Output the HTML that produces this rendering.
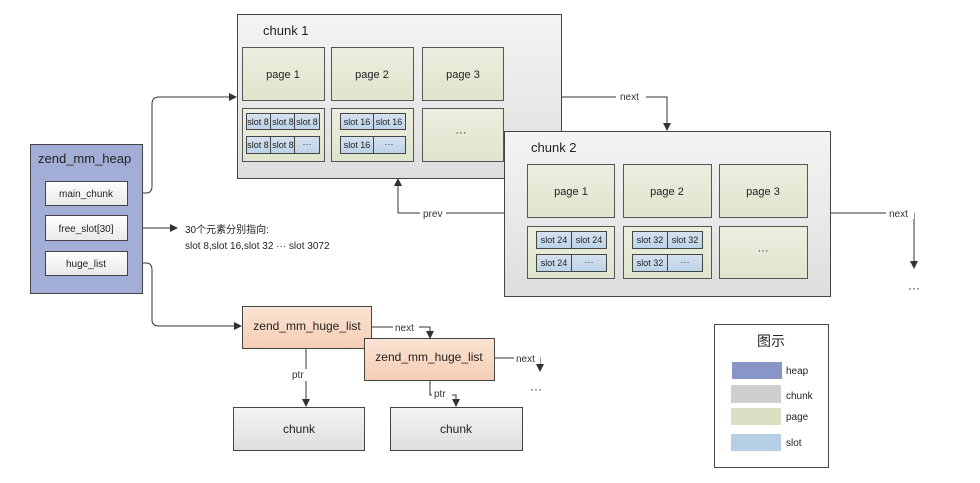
<!DOCTYPE html>
<html><head><meta charset="utf-8"><style>
html,body{margin:0;padding:0;background:#fff;}
svg{display:block;font-family:"Liberation Sans","Noto Sans CJK SC",sans-serif;}
</style></head><body>
<svg width="980" height="483" viewBox="0 0 980 483" xmlns="http://www.w3.org/2000/svg">
<defs>
<linearGradient id="gc" x1="0" y1="0" x2="0" y2="1"><stop offset="0" stop-color="#f4f4f4"/><stop offset="1" stop-color="#dedede"/></linearGradient>
<linearGradient id="gp" x1="0" y1="0" x2="0" y2="1"><stop offset="0" stop-color="#eceedf"/><stop offset="1" stop-color="#dfe5cc"/></linearGradient>
<linearGradient id="gs" x1="0" y1="0" x2="0" y2="1"><stop offset="0" stop-color="#d6e2ee"/><stop offset="1" stop-color="#bcd2e8"/></linearGradient>
<linearGradient id="gh" x1="0" y1="0" x2="0" y2="1"><stop offset="0" stop-color="#fbe4d4"/><stop offset="1" stop-color="#f4cdb3"/></linearGradient>
<linearGradient id="gw" x1="0" y1="0" x2="0" y2="1"><stop offset="0" stop-color="#ffffff"/><stop offset="1" stop-color="#e8e8e8"/></linearGradient>
<marker id="ar" markerWidth="8" markerHeight="8" refX="7" refY="4" orient="auto" markerUnits="userSpaceOnUse"><path d="M0,0 L8,4 L0,8 z" fill="#333"/></marker>
</defs>
<g stroke="#333" stroke-width="1" fill="none">
<path d="M128,193 H146 Q152,193 152,186 V104 Q152,97 159,97 H236" marker-end="url(#ar)"/>
<path d="M128,228 H177" marker-end="url(#ar)"/>
<path d="M128,263 H146 Q152,263 152,270 V320 Q152,326 159,326 H241" marker-end="url(#ar)"/>
<path d="M561,97 H667 V130" marker-end="url(#ar)"/>
<path d="M504,213 H398 V179" marker-end="url(#ar)"/>
<path d="M830,213 H914 V268" marker-end="url(#ar)"/>
<path d="M371,327 H430 V338" marker-end="url(#ar)"/>
<path d="M494,358 H540 V371" marker-end="url(#ar)"/>
<path d="M306,348 V406" marker-end="url(#ar)"/>
<path d="M430,380 V395 H456 V406" marker-end="url(#ar)"/>
</g>
<g fill="#fff" font-size="10" fill-opacity="1">
<rect x="616" y="91" width="30" height="12"/><rect x="420" y="207" width="26" height="12"/>
<rect x="886" y="207" width="28" height="12"/><rect x="393" y="321" width="26" height="12"/>
<rect x="514" y="352" width="26" height="12"/><rect x="290" y="369" width="20" height="12"/>
<rect x="432" y="389" width="20" height="12"/>
</g>
<g font-size="10" fill="#333">
<text x="620" y="100">next</text><text x="423" y="217">prev</text><text x="889" y="217">next</text>
<text x="395" y="331">next</text><text x="516" y="362">next</text>
<text x="292" y="378">ptr</text><text x="434" y="397">ptr</text>
</g>
<!-- chunk1 -->
<rect x="237.5" y="14.5" width="324" height="164" fill="url(#gc)" stroke="#444"/>
<text x="263" y="35" font-size="13" fill="#222">chunk 1</text>
<g stroke="#555" fill="url(#gp)">
<rect x="242.5" y="47.5" width="82" height="53"/><rect x="331.5" y="47.5" width="82" height="53"/><rect x="422.5" y="47.5" width="81" height="53"/>
<rect x="242.5" y="108.5" width="82" height="53"/><rect x="331.5" y="108.5" width="82" height="53"/><rect x="422.5" y="108.5" width="81" height="53"/>
</g>
<g font-size="11" fill="#222" text-anchor="middle">
<text x="283" y="78">page 1</text><text x="372" y="78">page 2</text><text x="463" y="78">page 3</text><text x="461" y="136">···</text>
</g>
<g stroke="#444" fill="url(#gs)">
<rect x="246.5" y="113.5" width="24" height="16"/><rect x="270.5" y="113.5" width="24" height="16"/><rect x="294.5" y="113.5" width="25" height="16"/>
<rect x="246.5" y="136.5" width="24" height="17"/><rect x="270.5" y="136.5" width="24" height="17"/><rect x="294.5" y="136.5" width="25" height="17"/>
<rect x="340.5" y="113.5" width="33" height="16"/><rect x="373.5" y="113.5" width="32" height="16"/>
<rect x="340.5" y="136.5" width="33" height="17"/><rect x="373.5" y="136.5" width="32" height="17"/>
</g>
<g font-size="9" fill="#222" text-anchor="middle">
<text x="258" y="125">slot 8</text><text x="283" y="125">slot 8</text><text x="307" y="125">slot 8</text>
<text x="258" y="148">slot 8</text><text x="283" y="148">slot 8</text><text x="307" y="147">···</text>
<text x="357" y="125">slot 16</text><text x="389" y="125">slot 16</text>
<text x="357" y="148">slot 16</text><text x="389" y="147">···</text>
</g>
<!-- chunk2 -->
<rect x="504.5" y="131.5" width="326" height="165" fill="url(#gc)" stroke="#444"/>
<text x="531" y="152" font-size="13" fill="#222">chunk 2</text>
<g stroke="#555" fill="url(#gp)">
<rect x="527.5" y="164.5" width="87" height="53"/><rect x="623.5" y="164.5" width="88" height="53"/><rect x="719.5" y="164.5" width="88" height="53"/>
<rect x="527.5" y="226.5" width="87" height="52"/><rect x="623.5" y="226.5" width="88" height="52"/><rect x="719.5" y="226.5" width="88" height="52"/>
</g>
<g font-size="11" fill="#222" text-anchor="middle">
<text x="571" y="195">page 1</text><text x="667" y="195">page 2</text><text x="763" y="195">page 3</text><text x="763" y="254">···</text>
</g>
<g stroke="#444" fill="url(#gs)">
<rect x="536.5" y="231.5" width="35" height="17"/><rect x="571.5" y="231.5" width="35" height="17"/>
<rect x="536.5" y="254.5" width="35" height="17"/><rect x="571.5" y="254.5" width="35" height="17"/>
<rect x="632.5" y="231.5" width="35" height="17"/><rect x="667.5" y="231.5" width="35" height="17"/>
<rect x="632.5" y="254.5" width="35" height="17"/><rect x="667.5" y="254.5" width="35" height="17"/>
</g>
<g font-size="9" fill="#222" text-anchor="middle">
<text x="554" y="243">slot 24</text><text x="589" y="243">slot 24</text><text x="554" y="266">slot 24</text><text x="589" y="265">···</text>
<text x="650" y="243">slot 32</text><text x="685" y="243">slot 32</text><text x="650" y="266">slot 32</text><text x="685" y="265">···</text>
</g>
<text x="908" y="292" font-size="12" fill="#222">···</text>
<!-- heap -->
<rect x="30.5" y="144.5" width="112" height="149" fill="#a3aed6" stroke="#444"/>
<text x="38" y="163" font-size="13" fill="#222">zend_mm_heap</text>
<g stroke="#444" fill="url(#gw)">
<rect x="45.5" y="181.5" width="82" height="24"/><rect x="45.5" y="215.5" width="82" height="25"/><rect x="45.5" y="251.5" width="82" height="24"/>
</g>
<g font-size="10" fill="#222" text-anchor="middle">
<text x="86" y="197">main_chunk</text><text x="86" y="232">free_slot[30]</text><text x="86" y="267">huge_list</text>
</g>
<text x="185" y="233" font-size="10" fill="#222">30个元素分别指向:</text>
<text x="185" y="249" font-size="10" fill="#222">slot 8,slot 16,slot 32 ··· slot 3072</text>
<!-- huge lists -->
<rect x="242.5" y="306.5" width="129" height="42" fill="url(#gh)" stroke="#444"/>
<text x="307" y="330" font-size="12" fill="#222" text-anchor="middle">zend_mm_huge_list</text>
<rect x="364.5" y="338.5" width="130" height="42" fill="url(#gh)" stroke="#444"/>
<text x="429" y="361" font-size="12" fill="#222" text-anchor="middle">zend_mm_huge_list</text>
<text x="530" y="393" font-size="12" fill="#222">···</text>
<rect x="233.5" y="407.5" width="131" height="43" fill="url(#gc)" stroke="#444"/>
<text x="299" y="433" font-size="12" fill="#222" text-anchor="middle">chunk</text>
<rect x="390.5" y="407.5" width="132" height="43" fill="url(#gc)" stroke="#444"/>
<text x="456" y="433" font-size="12" fill="#222" text-anchor="middle">chunk</text>
<!-- legend -->
<rect x="714.5" y="324.5" width="114" height="143" fill="#fff" stroke="#444"/>
<text x="771" y="346" font-size="14" fill="#222" text-anchor="middle">图示</text>
<rect x="732" y="362" width="50" height="17" fill="#8795c8"/>
<rect x="731" y="385" width="50" height="18" fill="#cfcfcf"/>
<rect x="731" y="408" width="50" height="17" fill="#d9e0c4"/>
<rect x="731" y="434" width="50" height="17" fill="#b7cfe6"/>
<g font-size="10" fill="#222">
<text x="786" y="374">heap</text><text x="786" y="399">chunk</text><text x="786" y="420">page</text><text x="786" y="446">slot</text>
</g>
</svg>
</body></html>
